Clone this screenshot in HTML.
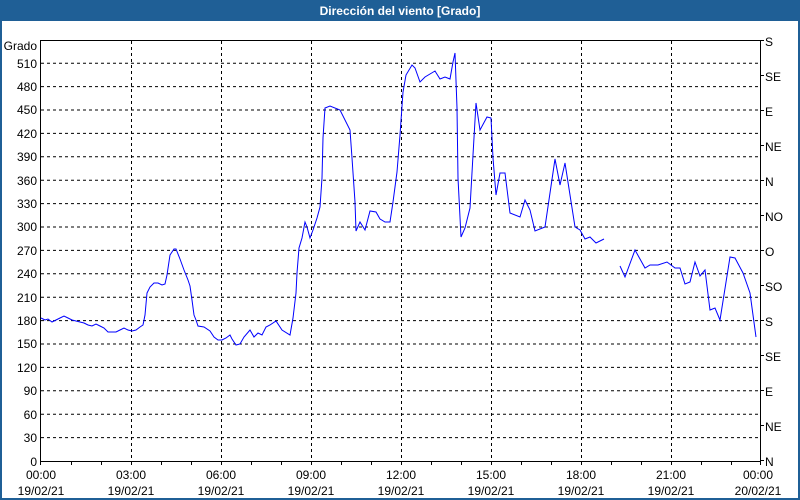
<!DOCTYPE html>
<html><head><meta charset="utf-8"><style>
html,body{margin:0;padding:0;background:#fff;}
svg{display:block;font-family:"Liberation Sans","DejaVu Sans",sans-serif;}
</style></head><body>
<svg width="800" height="500" xmlns="http://www.w3.org/2000/svg">
<rect x="0" y="0" width="800" height="500" fill="#fff"/>
<rect x="0" y="0" width="800" height="21" fill="#1f5f96"/>
<rect x="0" y="0" width="2" height="500" fill="#1f5f96"/>
<rect x="798" y="0" width="2" height="500" fill="#1f5f96"/>
<rect x="0" y="498" width="800" height="2" fill="#1f5f96"/>
<text x="400" y="15" fill="#fff" font-size="12" font-weight="bold" text-anchor="middle">Dirección del viento [Grado]</text>
<g stroke="#000" stroke-width="1" stroke-dasharray="3,3" fill="none">
<path d="M41 437.6H760M41 414.2H760M41 390.8H760M41 367.4H760M41 344H760M41 320.6H760M41 297.2H760M41 273.8H760M41 250.4H760M41 227H760M41 203.6H760M41 180.2H760M41 156.8H760M41 133.4H760M41 110H760M41 86.6H760M41 63.2H760"/>
<path d="M131.5 41V461M221.5 41V461M311.5 41V461M401.5 41V461M491.5 41V461M581.5 41V461M671.5 41V461"/>
</g>
<g stroke="#000" stroke-width="1" fill="none">
<path d="M40.5 40.5H760.5V461M40.5 40V461.5H760.5"/>
<path d="M71.5 461V465M101.5 461V465M131.5 461V465M161.5 461V465M191.5 461V465M221.5 461V465M251.5 461V465M281.5 461V465M311.5 461V465M341.5 461V465M371.5 461V465M401.5 461V465M431.5 461V465M461.5 461V465M491.5 461V465M521.5 461V465M551.5 461V465M581.5 461V465M611.5 461V465M641.5 461V465M671.5 461V465M701.5 461V465M731.5 461V465M40.5 461V465M760.5 461V465"/>
<path d="M760 40.5H764M760 75.5H764M760 110.5H764M760 145.5H764M760 180.5H764M760 215.5H764M760 250.5H764M760 285.5H764M760 320.5H764M760 355.5H764M760 390.5H764M760 425.5H764M760 460.5H764"/>
</g>
<g fill="none" stroke="#0000ff" stroke-width="1">
<polyline points="41,318 45,320 48,319 52,322 56,320 60,318 64,316 68,318 72,320 76,321 80,322 84,323 88,325 92,326 96,324 100,326 104,328 108,332 112,332 116,332 120,330 124,328 128,330 132,331 136,330 140,327 143,325 145,315 147,293 150,287 154,283 158,283 162,285 165,284 167,275 170,255 174,249 176,249 180,259 184,270 188,280 190,286 192,300 194,315 196,320 198,326 204,327 210,331 214,337 218,340 222,340 226,338 230,335 232,339 236,345 240,344 244,337 250,330 254,337 258,333 262,335 266,327 270,325 276,321 282,330 290,335 293,318 296,293 297,273 299,248 302,238 305,222 307,227 310,238 313,230 317,218 320,207 322,178 323,138 325,108 330,106 340,110 350,130 352,158 355,202 356,231 360,222 365,230 370,211 376,212 380,219 385,222 390,222 393,202 397,172 400,135 403,92 406,75 412,65 415,68 420,82 425,77 435,71 440,79 445,77 450,79 453,62 455,53 457,108 458,178 461,237 465,228 470,208 473,155 476,103 480,130 487,117 491,118 493,158 496,195 500,173 505,173 510,213 520,217 525,200 530,210 535,231 545,227 550,193 555,159 560,185 565,163 575,227 580,230 585,239 590,237 596,243 604,239"/>
<polyline points="620,266 625,277 635,250 645,268 650,265 658,265 667,262 675,268 680,268 685,284 690,282 695,262 700,276 705,270 710,310 715,308 720,320 730,257 735,258 743,273 750,293 756,337"/>
</g>
<g font-size="12" fill="#000" text-anchor="end">
<text x="37" y="50">Grado</text>
<text x="37" y="68">510</text><text x="37" y="91">480</text><text x="37" y="114">450</text><text x="37" y="138">420</text><text x="37" y="161">390</text><text x="37" y="185">360</text><text x="37" y="208">330</text><text x="37" y="231">300</text><text x="37" y="255">270</text><text x="37" y="278">240</text><text x="37" y="302">210</text><text x="37" y="325">180</text><text x="37" y="348">150</text><text x="37" y="372">120</text><text x="37" y="395">90</text><text x="37" y="419">60</text><text x="37" y="442">30</text><text x="37" y="466">0</text>
</g>
<g font-size="12" fill="#000">
<text x="765" y="46">S</text><text x="765" y="81">SE</text><text x="765" y="116">E</text><text x="765" y="151">NE</text><text x="765" y="186">N</text><text x="765" y="221">NO</text><text x="765" y="256">O</text><text x="765" y="291">SO</text><text x="765" y="326">S</text><text x="765" y="361">SE</text><text x="765" y="396">E</text><text x="765" y="431">NE</text><text x="765" y="466">N</text>
</g>
<g font-size="12" fill="#000" text-anchor="middle">
<text x="41" y="479">00:00</text><text x="41" y="495">19/02/21</text>
<text x="131" y="479">03:00</text><text x="131" y="495">19/02/21</text>
<text x="221" y="479">06:00</text><text x="221" y="495">19/02/21</text>
<text x="311" y="479">09:00</text><text x="311" y="495">19/02/21</text>
<text x="401" y="479">12:00</text><text x="401" y="495">19/02/21</text>
<text x="491" y="479">15:00</text><text x="491" y="495">19/02/21</text>
<text x="581" y="479">18:00</text><text x="581" y="495">19/02/21</text>
<text x="671" y="479">21:00</text><text x="671" y="495">19/02/21</text>
<text x="758" y="479">00:00</text><text x="758" y="495">20/02/21</text>
</g>
</svg>
</body></html>
